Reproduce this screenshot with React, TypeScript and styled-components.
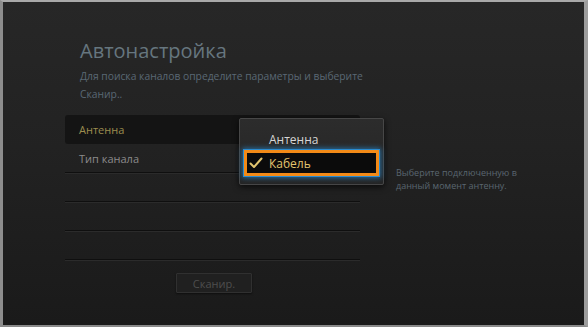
import styled, { createGlobalStyle } from "styled-components";

const GlobalStyle = createGlobalStyle`
    html, body {
        margin: 0;
        padding: 0;
        background: #1a1a1a;
    }
    body {
        font-family: "Open Sans", "DejaVu Sans", sans-serif;
    }
`;

const Screen = styled.div`
    position: relative;
    box-sizing: border-box;
    width: 588px;
    height: 327px;
    border-top: 2px solid #a9a9a9;
    border-left: 3px solid #8d8d8d;
    border-right: 4px solid #9d9d9d;
    border-bottom: 2px solid #8a8a8a;
    background: linear-gradient(180deg, #272727 0%, #222222 45%, #1a1a1a 100%);
    overflow: hidden;
`;

const Header = styled.header`
    padding: 37px 0 0 77px;
`;

const Title = styled.h1`
    margin: 0;
    font-size: 20px;
    line-height: 24px;
    font-weight: 400;
    color: #66767f;
`;

const Subtitle = styled.p`
    margin: 4px 0 0;
    font-size: 10.3px;
    line-height: 18px;
    color: #5a6874;
`;

const Body = styled.div`
    display: grid;
    grid-template-columns: 295px 1fr;
    column-gap: 36px;
    padding: 12px 0 0 62px;
`;

const ListColumn = styled.div`
    position: relative;
    display: flex;
    flex-direction: column;
`;

const List = styled.ul`
    margin: 0;
    padding: 0;
    list-style: none;
`;

const Row = styled.li<{ $active?: boolean; $line?: boolean }>`
    box-sizing: border-box;
    height: 29px;
    display: flex;
    align-items: center;
    padding-left: 14px;
    font-size: 11px;
    color: ${(p) => (p.$active ? "#9c8d4f" : "#8b8b8b")};
    background: ${(p) => (p.$active ? "#141414" : "transparent")};
    border-radius: ${(p) => (p.$active ? "3px" : "0")};
    border-bottom: ${(p) => (p.$line ? "1px solid #0f0f0f" : "none")};
    box-shadow: ${(p) => (p.$line ? "0 1px 0 #2b2b2b" : "none")};
`;

const Dropdown = styled.div`
    position: absolute;
    left: 174px;
    top: 3px;
    box-sizing: border-box;
    width: 145px;
    height: 67px;
    padding: 11px 4px 0 4px;
    background: linear-gradient(180deg, #2c2c2c 0%, #252525 100%);
    border: 1px solid #474747;
    border-radius: 2px;
    box-shadow: 0 2px 6px rgba(0, 0, 0, 0.7);
`;

const Option = styled.div<{ $selected?: boolean }>`
    box-sizing: border-box;
    height: ${(p) => (p.$selected ? "26px" : "19px")};
    margin-top: ${(p) => (p.$selected ? "1px" : "0")};
    display: flex;
    align-items: center;
    padding-left: ${(p) => (p.$selected ? "2px" : "25px")};
    font-size: 12px;
    color: ${(p) => (p.$selected ? "#e2c56f" : "#d6d6d6")};
    background: ${(p) => (p.$selected ? "#0b0b0b" : "transparent")};
    border: ${(p) => (p.$selected ? "3px solid #f28a17" : "none")};
    box-shadow: ${(p) =>
        p.$selected ? "0 0 0 1px #2a8bd0, 0 0 5px 2px rgba(40, 150, 230, 0.6)" : "none"};
`;

const Check = styled.svg`
    width: 14px;
    height: 12px;
    margin-right: 6px;
    flex-shrink: 0;
`;

const ScanButton = styled.button`
    align-self: center;
    margin: 13px 0 0 3px;
    width: 76px;
    height: 20px;
    padding: 0;
    background: #202020;
    border: 1px solid #303030;
    border-radius: 1px;
    font-family: inherit;
    font-size: 11px;
    color: #4e4e4e;
    box-shadow: 0 1px 2px rgba(0, 0, 0, 0.5);
`;

const Help = styled.p`
    margin: 51px 0 0;
    font-size: 9px;
    line-height: 13px;
    color: #5a6670;
`;

const App = () => {
    return (
        <>
            <GlobalStyle />
            <Screen>
                <Header>
                    <Title>Автонастройка</Title>
                    <Subtitle>
                        Для поиска каналов определите параметры и выберите
                        <br />
                        Сканир..
                    </Subtitle>
                </Header>
                <Body>
                    <ListColumn>
                        <List>
                            <Row $active>Антенна</Row>
                            <Row $line>Тип канала</Row>
                            <Row $line />
                            <Row $line />
                            <Row $line />
                        </List>
                        <Dropdown>
                            <Option>Антенна</Option>
                            <Option $selected>
                                <Check viewBox="0 0 14 12">
                                    <path
                                        d="M1.5 6.5 L5 10 L12.5 1.5"
                                        fill="none"
                                        stroke="#e2c56f"
                                        strokeWidth="2"
                                        strokeLinecap="round"
                                        strokeLinejoin="round"
                                    />
                                </Check>
                                Кабель
                            </Option>
                        </Dropdown>
                        <ScanButton>Сканир.</ScanButton>
                    </ListColumn>
                    <Help>
                        Выберите подключенную в
                        <br />
                        данный момент антенну.
                    </Help>
                </Body>
            </Screen>
        </>
    );
};

export default App;
